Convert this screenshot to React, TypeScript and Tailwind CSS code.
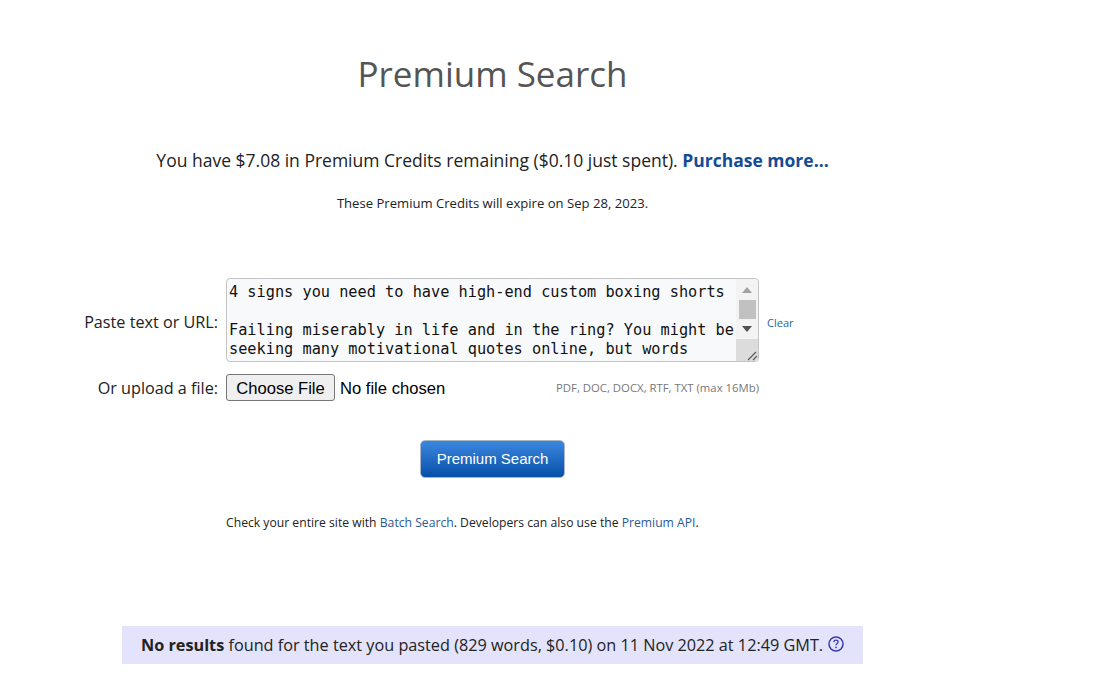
const openSans = "font-['Open_Sans',sans-serif]"

const ScrollColumn = () => (
    <div className="w-[22px] shrink-0 flex flex-col items-center bg-[#f3f3f3] rounded-r-[3px]">
        <div className="h-[21px] w-full flex items-center justify-center">
            <svg width="10" height="6" viewBox="0 0 10 6"><path d="M5 0 L10 6 L0 6 Z" fill="#a3a3a3" /></svg>
        </div>
        <div className="h-[19px] w-[17px] bg-[#c1c1c1]" />
        <div className="flex-1 w-full flex items-center justify-center">
            <svg width="10" height="6" viewBox="0 0 10 6"><path d="M0 0 L10 0 L5 6 Z" fill="#505050" /></svg>
        </div>
        <div className="h-[22px] w-full bg-[#dcdcdc] flex items-end justify-end">
            <svg width="12" height="12" viewBox="0 0 12 12">
                <path d="M2 11 L10 3 M7 11 L11 7" stroke="#5a5a5a" strokeWidth="1.2" fill="none" />
            </svg>
        </div>
    </div>
)

export default function App() {
    return (
        <div className={`w-[985px] min-h-[687px] bg-white text-[#222] flex flex-col items-center ${openSans}`}>
            <h1 className="mt-[51px] text-[35px] leading-[46px] text-[#555]">Premium Search</h1>

            <p className="mt-[51px] text-[17.5px] leading-[24px] text-[#222]">
                You have $7.08 in Premium Credits remaining ($0.10 just spent).{" "}
                <a className="font-bold text-[#144c94]">Purchase more...</a>
            </p>
            <p className="mt-[22px] text-[13.1px] leading-[18px]">These Premium Credits will expire on Sep 28, 2023.</p>

            <div className="mt-[66px] w-[985px] grid grid-cols-[218px_533px_1fr] gap-x-[8px] gap-y-[12px] items-center">
                <label className="text-right text-[16.2px] leading-[22px] pt-[4px]">Paste text or URL:</label>
                <div className="flex h-[84px] w-[533px] border border-[#c4c4c4] rounded-[4px] bg-[#f8f9fb] overflow-hidden">
                    <textarea
                        readOnly
                        className="flex-1 min-w-0 h-full resize-none overflow-hidden bg-transparent outline-none pl-[2px] pt-[4px] text-[15.25px] leading-[19px] text-[#111] font-['DejaVu_Sans_Mono',monospace]"
                        value={"4 signs you need to have high-end custom boxing shorts\n\nFailing miserably in life and in the ring? You might be seeking many motivational quotes online, but words"}
                    />
                    <ScrollColumn />
                </div>
                <a className="text-[11px] leading-[14px] pt-[6px] text-[#2a6496]">Clear</a>

                <label className="text-right text-[16.2px] leading-[22px]">Or upload a file:</label>
                <div className="flex items-center justify-between w-[533px]">
                    <input
                        type="file"
                        className="text-[16.6px] leading-[27px] text-black font-['Liberation_Sans',sans-serif] file:h-[27px] file:w-[109px] file:mr-[5px] file:pb-[3px] file:bg-[#efefef] file:border file:border-[#767676] file:rounded-[3px] file:text-[16.6px]"
                    />
                    <span className="text-[11.35px] leading-[14px] text-[#777] whitespace-nowrap">PDF, DOC, DOCX, RTF, TXT (max 16Mb)</span>
                </div>
                <div />
            </div>

            <button className="mt-[38px] w-[145px] h-[38px] rounded-[5px] border border-[#a9b8c8] bg-gradient-to-b from-[#3b87e0] to-[#0450a8] text-white text-[15px] font-['Liberation_Sans',sans-serif]">
                Premium Search
            </button>

            <p className="mt-[37px] self-start ml-[226px] text-[12.18px] leading-[16px] text-[#222]">
                Check your entire site with <a className="text-[#2a5a96]">Batch Search</a>. Developers can also use the <a className="text-[#2a5a96]">Premium API</a>.
            </p>

            <div className="mt-[95px] w-[741px] h-[38px] bg-[#e3e3fb] flex items-center pl-[19px] text-[16.24px] text-[#222]">
                <span>
                    <b className="font-bold">No results</b> found for the text you pasted (829 words, $0.10) on 11 Nov 2022 at 12:49 GMT.
                </span>
                <svg className="ml-[5px] mb-[3px]" width="16" height="16" viewBox="0 0 16 16">
                    <circle cx="8" cy="8" r="7" fill="none" stroke="#3b3bb0" strokeWidth="1.5" />
                    <path d="M5.9 6.3 C5.9 4.9 6.9 4.2 8 4.2 C9.2 4.2 10.1 5 10.1 6 C10.1 7.4 8 7.5 8 9.2" fill="none" stroke="#3b3bb0" strokeWidth="1.3" />
                    <circle cx="8" cy="11.4" r="0.9" fill="#3b3bb0" />
                </svg>
            </div>
        </div>
    )
}
